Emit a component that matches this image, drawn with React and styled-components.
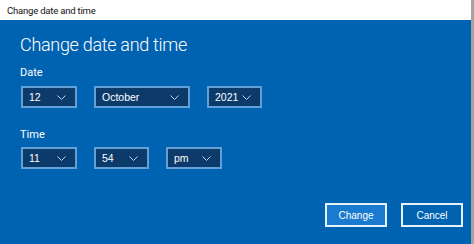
import React from 'react'
import styled, { createGlobalStyle } from 'styled-components'

const GlobalStyle = createGlobalStyle`
  html, body {
    margin: 0;
    padding: 0;
    background: #ffffff;
  }
  body {
    font-family: 'Liberation Sans', 'Noto Sans', sans-serif;
  }
`

const Window = styled.div`
  width: 474px;
  height: 244px;
  display: flex;
  flex-direction: column;
  box-sizing: border-box;
  border-right: 3px solid #a3a3a3;
  overflow: hidden;
`

const TitleBar = styled.div`
  height: 20px;
  flex: none;
  background: #ffffff;
  display: flex;
  align-items: center;
  padding-left: 7px;
  font-family: Roboto, sans-serif;
  font-size: 9.5px;
  letter-spacing: -0.2px;
  color: #111111;
`

const Body = styled.div`
  flex: 1;
  background: #0063b1;
  color: #ffffff;
  display: flex;
  flex-direction: column;
  padding: 13px 8px 0 20px;
`

const Heading = styled.h1`
  margin: 0;
  font-family: Roboto, sans-serif;
  font-weight: 300;
  font-size: 18px;
  letter-spacing: -0.3px;
  line-height: 24px;
`

const Label = styled.div`
  font-family: Roboto, sans-serif;
  font-size: 11px;
  line-height: 14px;
  margin-top: ${(p) => p.$top}px;
`

const Row = styled.div`
  display: flex;
  gap: 17px;
  margin-top: ${(p) => p.$top}px;
  padding-left: 1px;
`

const Select = styled.div`
  box-sizing: border-box;
  width: ${(p) => p.$w}px;
  height: 22px;
  background: #0c3b6b;
  border: 2px solid #64a0d8;
  display: flex;
  align-items: center;
  justify-content: space-between;
  padding: 0 9px 0 6px;
  font-size: 10.5px;
`

const Chevron = () => (
  <svg width='9' height='5' viewBox='0 0 9 5'>
    <polyline points='0.5,0.5 4.5,4.5 8.5,0.5' fill='none' stroke='#b9d3ee' strokeWidth='1' />
  </svg>
)

const Footer = styled.div`
  margin-top: auto;
  margin-bottom: 17px;
  display: flex;
  justify-content: flex-end;
  gap: 14px;
`

const Button = styled.div`
  box-sizing: border-box;
  width: 62px;
  height: 24px;
  border: 2px solid #e8f0f8;
  background: ${(p) => (p.$primary ? '#1a7ad0' : '#0063b1')};
  display: flex;
  align-items: center;
  justify-content: center;
  font-size: 10px;
`

const Dropdown = ({ w, value }) => (
  <Select $w={w}>
    <span>{value}</span>
    <Chevron />
  </Select>
)

export default function App() {
  return (
    <Window>
      <GlobalStyle />
      <TitleBar>Change date and time</TitleBar>
      <Body>
        <Heading>Change date and time</Heading>
        <Label $top={9}>Date</Label>
        <Row $top={6}>
          <Dropdown w={56} value='12' />
          <Dropdown w={96} value='October' />
          <Dropdown w={55} value='2021' />
        </Row>
        <Label $top={20}>Time</Label>
        <Row $top={5}>
          <Dropdown w={56} value='11' />
          <Dropdown w={55} value='54' />
          <Dropdown w={56} value='pm' />
        </Row>
        <Footer>
          <Button $primary>Change</Button>
          <Button>Cancel</Button>
        </Footer>
      </Body>
    </Window>
  )
}
